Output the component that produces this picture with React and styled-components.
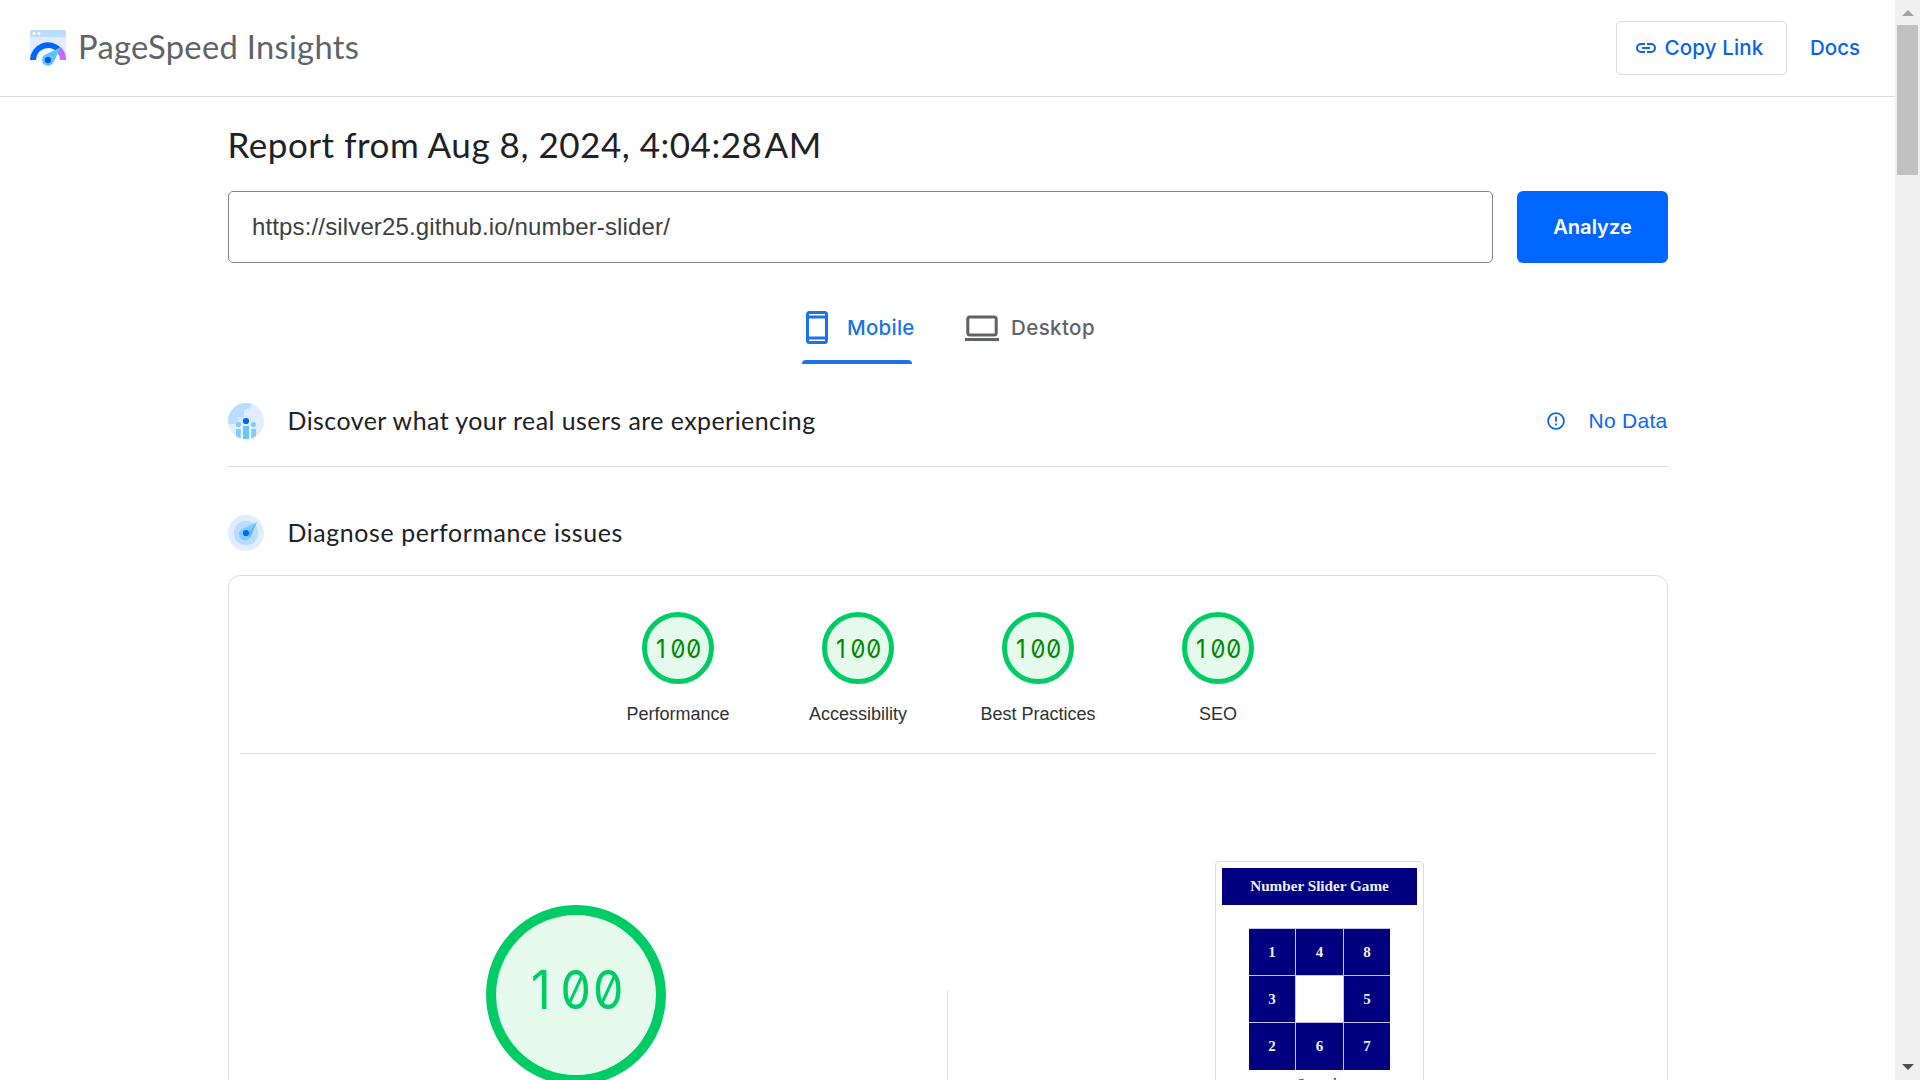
import React from 'react';
import styled, { createGlobalStyle } from 'styled-components';

const display = "Lato, 'Liberation Sans', sans-serif";
const body = "'Liberation Sans', Arial, sans-serif";

const GlobalStyle = createGlobalStyle`
  * { box-sizing: border-box; }
  body { margin: 0; background: #fff; overflow: hidden; }
  svg { flex: none; }
`;

const Window = styled.div`
  display: flex;
  width: 1920px;
  height: 1080px;
  overflow: hidden;
  background: #fff;
  font-family: ${body};
`;

const Page = styled.div`
  flex: 1;
  min-width: 0;
  overflow: hidden;
`;

const ScrollTrack = styled.div`
  width: 25px;
  height: 1080px;
  padding: 10px 2px 10px;
  background: #f0f0f0;
  display: flex;
  flex-direction: column;
  align-items: center;
`;

const Arrow = styled.svg`
  display: block;
  flex: none;
  fill: ${(p) => p.$color};
`;

const Thumb = styled.div`
  width: 21px;
  height: 150px;
  margin: 9px 0 auto;
  background: #c1c1c1;
`;

const Header = styled.header`
  height: 97px;
  border-bottom: 1px solid #dadce0;
  padding: 0 35px 0 30px;
  display: flex;
  align-items: center;
`;

const Brand = styled.div`
  margin-left: 12px;
  padding-bottom: 2px;
  font: 400 32.7px/40px ${display};
  letter-spacing: 0.3px;
  color: #5f6368;
  white-space: nowrap;
`;

const CopyButton = styled.button`
  margin-left: auto;
  width: 171px;
  height: 54px;
  padding: 0 0 0 19px;
  border: 1px solid #dadce0;
  border-radius: 5px;
  background: #fff;
  color: #0b63e5;
  font: 500 20.5px/24px Inter, sans-serif;
  letter-spacing: 0.15px;
  display: flex;
  align-items: center;
  gap: 8.5px;
  white-space: nowrap;
`;

const DocsLink = styled.a`
  margin-left: 23px;
  width: 50px;
  color: #0b63e5;
  font: 500 20.5px/24px Inter, sans-serif;
  letter-spacing: 0px;
`;

const Main = styled.main`
  width: 1440px;
  margin-left: 228px;
`;

const ReportTitle = styled.h1`
  margin: 26px 0 0 -0.5px;
  height: 68px;
  font: 400 35px/42px ${display};
  letter-spacing: 0.53px;
  color: #202124;
  white-space: nowrap;
`;

const ThinGap = styled.span`
  letter-spacing: -6.8px;
`;

const UrlForm = styled.div`
  display: flex;
  gap: 24px;
  height: 72px;
`;

const UrlField = styled.div`
  width: 1265px;
  border: 1px solid #80868b;
  border-radius: 5px;
  padding: 0 23px;
  display: flex;
  align-items: center;
  font-size: 24px;
  letter-spacing: 0.14px;
  color: #3c4043;
`;

const AnalyzeButton = styled.button`
  width: 151px;
  border: 0;
  border-radius: 6px;
  background: #0066ff;
  color: #fff;
  font: 600 20.1px/24px Inter, sans-serif;
  padding: 0;
`;

const Tabs = styled.div`
  display: flex;
  height: 101px;
  padding: 31px 0 0 574px;
`;

const Tab = styled.div`
  width: ${(p) => p.$width}px;
  height: 70px;
  margin-right: 48.5px;
`;

const TabLabel = styled.div`
  height: 67px;
  display: flex;
  align-items: center;
  gap: ${(p) => p.$gap}px;
  padding-left: 4px;
  font: 500 20.5px/24px Inter, sans-serif;
  letter-spacing: ${(p) => p.$spacing}px;
  white-space: nowrap;
  color: ${(p) => (p.$active ? '#1a73e8' : '#5f6368')};
`;

const TabText = styled.span`
  padding-top: 1px;
`;

const TabLine = styled.div`
  height: 4px;
  margin-top: -1px;
  border-radius: 4px 4px 0 0;
  background: #1a73e8;
`;

const SectionRow = styled.section`
  display: flex;
  align-items: center;
  height: ${(p) => p.$height}px;
  padding-top: ${(p) => p.$top}px;
  border-bottom: ${(p) => (p.$line ? '1px solid #dadce0' : '0')};
`;

const SectionTitle = styled.h2`
  margin: 0 auto 0 23.5px;
  padding-bottom: 2px;
  font: 400 24.9px/30px ${display};
  letter-spacing: ${(p) => p.$spacing}px;
  color: #202124;
  white-space: nowrap;
`;

const NoData = styled.div`
  display: flex;
  align-items: center;
  gap: 24px;
  padding-right: 0.5px;
  color: #0b66f0;
  font-size: 21px;
  letter-spacing: 0.27px;
  line-height: 24px;
  white-space: nowrap;
`;

const Card = styled.section`
  height: 640px;
  border: 1px solid #dadce0;
  border-radius: 12px;
  padding: 0 12px;
`;

const Scores = styled.div`
  height: 178px;
  padding-top: 36px;
  border-bottom: 1px solid #dadce0;
  display: flex;
  justify-content: center;
`;

const Score = styled.div`
  width: 180px;
  display: flex;
  flex-direction: column;
  align-items: center;
  gap: 18px;
  font-size: 18px;
  line-height: 24px;
  color: #303134;
`;

const Ring = styled.div`
  flex: none;
  width: ${(p) => p.$size}px;
  height: ${(p) => p.$size}px;
  border: ${(p) => p.$stroke}px solid #0c6;
  border-radius: 50%;
  background: #e5f9ed;
  color: ${(p) => p.$color};
  display: flex;
  align-items: center;
  justify-content: center;
  padding: ${(p) => p.$pad};
`;

const RingValue = styled.span`
  font-family: Inter, sans-serif;
  font-weight: 430;
  font-size: ${(p) => p.$size}px;
  line-height: 1;
  white-space: nowrap;
  font-feature-settings: 'zero' 1;
  letter-spacing: 0.04em;
  margin-right: -0.04em;
  transform: scaleX(0.91);
`;

const NarrowDigit = styled.span`
  display: inline-block;
  width: 0.68em;
  padding-right: 0.1em;
  text-align: center;
`;

const Detail = styled.div`
  display: flex;
  height: 450px;
`;

const GaugeColumn = styled.div`
  width: 706px;
  padding: 151px 0 0 245px;
`;

const Separator = styled.div`
  width: 1px;
  margin-top: 237px;
  background: #dadce0;
`;

const PreviewColumn = styled.div`
  flex: 1;
  padding: 107px 0 0 267px;
`;

const Preview = styled.div`
  width: 209px;
  height: 380px;
  border: 1px solid #dadce0;
  border-radius: 4px;
  padding: 6px;
  font-family: 'Liberation Serif', 'Times New Roman', serif;
  display: flex;
  flex-direction: column;
  align-items: center;
`;

const GameTitle = styled.div`
  width: 195px;
  height: 36.5px;
  flex: none;
  background: #000080;
  color: #eef;
  font-weight: 700;
  font-size: 15.2px;
  line-height: 36px;
  text-align: center;
`;

const Board = styled.div`
  margin-top: 23.5px;
  padding-top: 0.6px;
  display: grid;
  grid-template-columns: repeat(3, 46.4px);
  grid-auto-rows: 46.4px;
  gap: 1px;
  background: #c5c5e8;
`;

const Tile = styled.div`
  background: ${(p) => (p.$empty ? '#fff' : '#000080')};
  color: #eef;
  font-weight: 700;
  font-size: 15px;
  line-height: 47px;
  text-align: center;
`;

const Timer = styled.div`
  margin-top: 4px;
  font-size: 13.3px;
  line-height: 18px;
  color: #222;
`;

const Logo = () => (
  <svg width="36" height="36" viewBox="0 0 36 36">
    <path d="M2 0h32a2 2 0 0 1 2 2v28H0V2a2 2 0 0 1 2-2z" fill="#e1edff" />
    <path d="M2 0h32a2 2 0 0 1 2 2v5H0V2a2 2 0 0 1 2-2z" fill="#b9dcff" />
    <circle cx="4" cy="3.5" r="1.4" fill="#fff" />
    <circle cx="9" cy="3.5" r="1.4" fill="#fff" />
    <path d="M6 30a12 12 0 0 1 24 0z" fill="#f5f9ff" />
    <path d="M3 30a15 15 0 0 1 26-10" fill="none" stroke="#0066ff" strokeWidth="6" />
    <path d="M31.4 17.6A18 18 0 0 1 36 30h-6a12 12 0 0 0-3-8z" fill="#c26cff" />
    <path d="M31 17L14.2 25.2A6 6 0 1 0 23.6 32z" fill="#5fc3ff" />
    <circle cx="18" cy="30" r="3.1" fill="#0058dd" />
  </svg>
);

const LinkIcon = () => (
  <svg width="20" height="10" viewBox="0 0 20 10" fill="none" stroke="currentColor" strokeWidth="2">
    <path d="M9 1H5a4 4 0 0 0 0 8h4M11 1h4a4 4 0 0 1 0 8h-4M6 5h8" />
  </svg>
);

const PhoneIcon = () => (
  <svg width="22" height="33" viewBox="0 0 22 33" fill="none" stroke="currentColor">
    <rect x="1.5" y="1.5" width="19" height="30" rx="2" strokeWidth="3" />
    <path d="M1.5 6h19M1.5 27h19" strokeWidth="3" />
  </svg>
);

const LaptopIcon = () => (
  <svg width="34" height="26" viewBox="0 0 34 26" fill="none" stroke="currentColor">
    <rect x="2.8" y="2" width="28.4" height="18" rx="2" strokeWidth="3" />
    <path d="M0 24.5h34" strokeWidth="3" />
  </svg>
);

const UsersIcon = () => (
  <svg width="36" height="36" viewBox="0 0 36 36">
    <defs>
      <clipPath id="usersClip"><circle cx="18" cy="18" r="18" /></clipPath>
    </defs>
    <g clipPath="url(#usersClip)">
      <rect width="36" height="36" fill="#e1edff" />
      <path d="M0 0h24c1 4-3 6-8 7v10h-6v4H0z" fill="#b9dcff" />
      <path d="M10 14h5v6h-5z" fill="#d4e8ff" />
      <circle cx="10.5" cy="21.7" r="2.6" fill="#80ccff" />
      <circle cx="25.5" cy="21.7" r="2.6" fill="#80ccff" />
      <path d="M8 26h5v10H8zM23 26h5v10h-5z" fill="#80ccff" />
      <path d="M15 23h6v13h-6z" fill="#66c6ff" />
      <path d="M13.5 23v13M22.5 23v13" stroke="#fff" strokeWidth="1.2" />
      <circle cx="18" cy="18" r="3.1" fill="#0066ff" />
    </g>
  </svg>
);

const DiagnoseIcon = () => (
  <svg width="36" height="36" viewBox="0 0 36 36">
    <circle cx="18" cy="18" r="18" fill="#e1edff" />
    <circle cx="18" cy="18" r="12.2" fill="#b9dcff" />
    <path d="M29 7L13.2 14.4A6.2 6.2 0 1 0 22.3 22.6z" fill="#80ccff" />
    <path d="M29 7L19 19l3.3 3.6z" fill="#5fbcf5" />
    <circle cx="18" cy="18" r="3.1" fill="#0066ff" />
  </svg>
);

const InfoIcon = () => (
  <svg width="18" height="18" viewBox="0 0 18 18" fill="none" stroke="currentColor">
    <circle cx="9" cy="9" r="7.9" strokeWidth="1.8" />
    <path d="M9 4.5v5.2M9 11.5v1.9" strokeWidth="1.8" />
  </svg>
);

const FullScore = ({ size }) => (
  <RingValue $size={size}><NarrowDigit>1</NarrowDigit>00</RingValue>
);

const scores = ['Performance', 'Accessibility', 'Best Practices', 'SEO'];
const tiles = ['1', '4', '8', '3', '', '5', '2', '6', '7'];

export default function App() {
  return (
    <Window>
      <GlobalStyle />
      <Page>
        <Header>
          <Logo />
          <Brand>PageSpeed Insights</Brand>
          <CopyButton><LinkIcon />Copy Link</CopyButton>
          <DocsLink>Docs</DocsLink>
        </Header>
        <Main>
          <ReportTitle>Report from Aug 8, 2024, 4:04:28<ThinGap> </ThinGap>AM</ReportTitle>
          <UrlForm>
            <UrlField>https://silver25.github.io/number-slider/</UrlField>
            <AnalyzeButton>Analyze</AnalyzeButton>
          </UrlForm>
          <Tabs>
            <Tab $width={110}>
              <TabLabel $active $gap={19} $spacing={0.25}><PhoneIcon /><TabText>Mobile</TabText></TabLabel>
              <TabLine />
            </Tab>
            <Tab $width={140}>
              <TabLabel $gap={12.5} $spacing={0.4}><LaptopIcon /><TabText>Desktop</TabText></TabLabel>
            </Tab>
          </Tabs>
          <SectionRow $height={103} $top={12} $line>
            <UsersIcon />
            <SectionTitle $spacing={0.47}>Discover what your real users are experiencing</SectionTitle>
            <NoData><InfoIcon />No Data</NoData>
          </SectionRow>
          <SectionRow $height={108} $top={24}>
            <DiagnoseIcon />
            <SectionTitle $spacing={0.6}>Diagnose performance issues</SectionTitle>
          </SectionRow>
          <Card>
            <Scores>
              {scores.map((label) => (
                <Score key={label}>
                  <Ring $size={72} $stroke={5} $color="#080" $pad="2px 0 0 0">
                    <FullScore size={26} />
                  </Ring>
                  {label}
                </Score>
              ))}
            </Scores>
            <Detail>
              <GaugeColumn>
                <Ring $size={180} $stroke={10.6} $color="#0c6" $pad="0 0 9px 0">
                  <FullScore size={53} />
                </Ring>
              </GaugeColumn>
              <Separator />
              <PreviewColumn>
                <Preview>
                  <GameTitle>Number Slider Game</GameTitle>
                  <Board>
                    {tiles.map((n, i) => <Tile key={i} $empty={!n}>{n}</Tile>)}
                  </Board>
                  <Timer>Seconds</Timer>
                </Preview>
              </PreviewColumn>
            </Detail>
          </Card>
        </Main>
      </Page>
      <ScrollTrack>
        <Arrow width="12" height="6" viewBox="0 0 12 6" $color="#a3a3a3"><path d="M0 6L6 0l6 6z" /></Arrow>
        <Thumb />
        <Arrow width="12" height="6" viewBox="0 0 12 6" $color="#505050"><path d="M0 0h12L6 6z" /></Arrow>
      </ScrollTrack>
    </Window>
  );
}
